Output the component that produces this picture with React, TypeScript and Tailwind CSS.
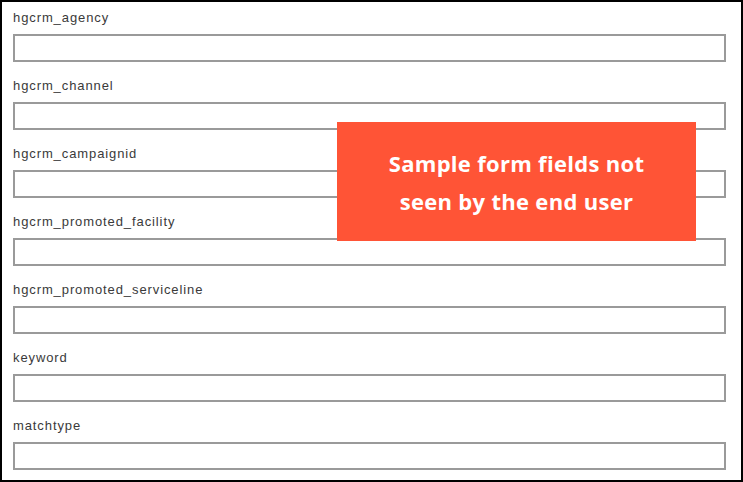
const fields = [
  "hgcrm_agency",
  "hgcrm_channel",
  "hgcrm_campaignid",
  "hgcrm_promoted_facility",
  "hgcrm_promoted_serviceline",
  "keyword",
  "matchtype",
];

export default function App() {
  return (
    <div className="relative h-[482px] w-[743px] overflow-hidden border-2 border-black bg-white">
      {/* Form fields */}
      <div className="flex flex-col pl-[11px] pr-[15px] pt-[8px]">
        {fields.map((name) => (
          <div key={name} className="flex flex-col pb-[16px]">
            <label className="font-['Liberation_Sans',Arial,sans-serif] text-[13px] leading-[16px] tracking-[0.9px] text-[#3a3a3a]">
              {name}
            </label>
            <input
              type="text"
              className="mt-[8px] h-[28px] w-full border-2 border-[#9a9a9a] bg-white outline-none"
            />
          </div>
        ))}
      </div>

      {/* Overlay note */}
      <div className="absolute left-[335px] top-[120px] flex h-[119px] w-[359px] flex-col items-center justify-center bg-[#ff5436] font-['Open_Sans',sans-serif] text-[22px] font-bold leading-[38px] tracking-[0.3px] text-white">
        <span>Sample form fields not</span>
        <span>seen by the end user</span>
      </div>
    </div>
  );
}
